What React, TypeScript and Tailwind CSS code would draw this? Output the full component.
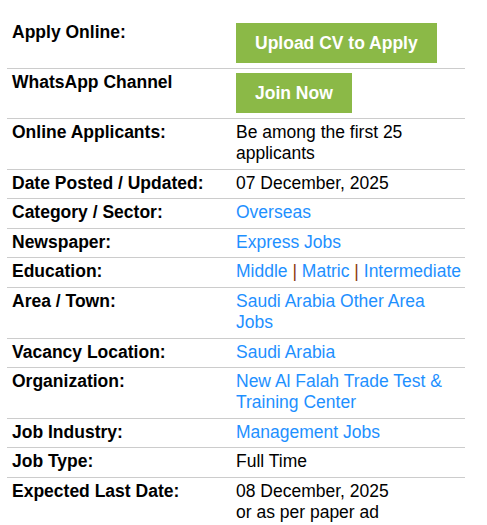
import React from "react";

type Row = { label: string; value: React.ReactNode };

const Link = ({ children }: { children: React.ReactNode }) => (
  <a href="#" className="text-[#1e90ff] no-underline">
    {children}
  </a>
);

const Sep = () => <span className="text-[#8b3a0f]"> | </span>;

const GreenButton = ({ children }: { children: React.ReactNode }) => (
  <a
    href="#"
    className="mt-px mb-[0.4px] block h-10 w-fit bg-[#8bb947] px-[19px] font-bold leading-10 text-white"
  >
    {children}
  </a>
);

const rows: Row[] = [
  { label: "Apply Online:", value: <GreenButton>Upload CV to Apply</GreenButton> },
  { label: "WhatsApp Channel", value: <GreenButton>Join Now</GreenButton> },
  { label: "Online Applicants:", value: "Be among the first 25 applicants" },
  { label: "Date Posted / Updated:", value: "07 December, 2025" },
  { label: "Category / Sector:", value: <Link>Overseas</Link> },
  { label: "Newspaper:", value: <Link>Express Jobs</Link> },
  {
    label: "Education:",
    value: (
      <span className="whitespace-nowrap">
        <Link>Middle</Link>
        <Sep />
        <Link>Matric</Link>
        <Sep />
        <Link>Intermediate</Link>
      </span>
    ),
  },
  { label: "Area / Town:", value: <Link>Saudi Arabia Other Area Jobs</Link> },
  { label: "Vacancy Location:", value: <Link>Saudi Arabia</Link> },
  { label: "Organization:", value: <Link>New Al Falah Trade Test &amp; Training Center</Link> },
  { label: "Job Industry:", value: <Link>Management Jobs</Link> },
  { label: "Job Type:", value: "Full Time" },
  {
    label: "Expected Last Date:",
    value: (
      <>
        08 December, 2025
        <br />
        or as per paper ad
      </>
    ),
  },
];

export default function App() {
  return (
    <div className="min-h-[525px] bg-white pt-[19px] pl-[7px] font-['Liberation_Sans',Arial,sans-serif] text-[17.5px] leading-[21px] text-black">
      <table className="w-[458px] table-fixed border-collapse">
        <tbody>
          {rows.map((r, i) => (
            <tr
              key={r.label}
              className={i < rows.length - 1 ? "border-b border-[#cccccc]" : ""}
            >
              <td className="w-[224px] pt-[3px] pb-[4.6px] pl-[5px] align-top font-bold">
                {r.label}
              </td>
              <td className="pt-[3px] pb-[4.6px] pl-[5px] align-top">{r.value}</td>
            </tr>
          ))}
        </tbody>
      </table>
    </div>
  );
}
